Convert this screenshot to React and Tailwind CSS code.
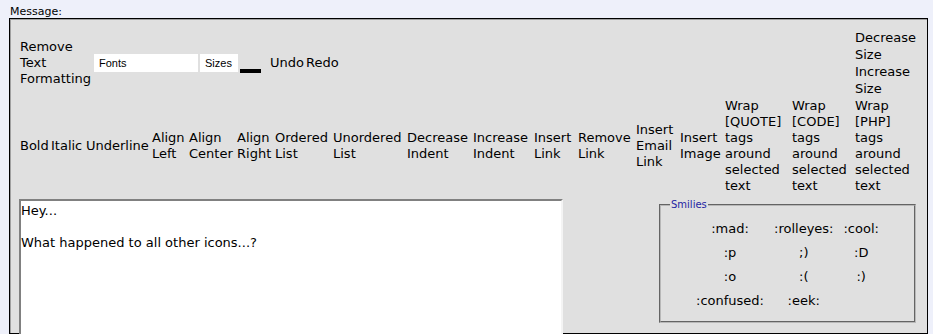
const font = "font-['DejaVu_Sans',Verdana,sans-serif]";

const row2 = [
  ["Bold", 31],
  ["Italic", 35],
  ["Underline", 66],
  ["Align Left", 37],
  ["Align Center", 48],
  ["Align Right", 38],
  ["Ordered List", 58],
  ["Unordered List", 74],
  ["Decrease Indent", 66],
  ["Increase Indent", 61],
  ["Insert Link", 44],
  ["Remove Link", 58],
  ["Insert Email Link", 44],
  ["Insert Image", 45],
  ["Wrap [QUOTE] tags around selected text", 67],
  ["Wrap [CODE] tags around selected text", 63],
  ["Wrap [PHP] tags around selected text", 64],
];

const smilies = [
  ":mad:", ":rolleyes:", ":cool:",
  ":p", ";)", ":D",
  ":o", ":(", ":)",
  ":confused:", ":eek:", "",
];

export default function App() {
  return (
    <div className={`${font} min-h-[334px] bg-[#eef0fa] text-black overflow-hidden`}>
      <div className="h-[18px] pl-[10px] pt-[5px] text-[11px] leading-[13px]">Message:</div>

      <div className="ml-[9px] mr-[5px] h-[316px] border border-black bg-[#e0e0e0] px-[9px] pt-[10px] shadow-[inset_1px_1px_0_#a0a0a0]">
        {/* top toolbar row */}
        <div className="flex h-[68px] items-center text-[13px]">
          <div className="w-[75px] pl-[1px] leading-[16px]">Remove Text Formatting</div>
          <div className="h-[18px] w-[104px] bg-white pl-[5px] font-['Liberation_Sans',Arial,sans-serif] text-[11px] leading-[18px]">
            Fonts
          </div>
          <div className="ml-[2px] h-[18px] w-[38px] bg-white pl-[5px] font-['Liberation_Sans',Arial,sans-serif] text-[11px] leading-[18px]">
            Sizes
          </div>
          <div className="ml-[2px] flex h-[20px] w-[21px] items-end">
            <div className="h-[4px] w-full bg-black" />
          </div>
          <div className="ml-[8px] px-[1px] leading-[16px]">Undo</div>
          <div className="px-[1px] leading-[16px]">Redo</div>
          <div className="ml-auto w-[64px] pl-[1px] leading-[17px]">
            <div>Decrease Size</div>
            <div>Increase Size</div>
          </div>
        </div>

        {/* second toolbar row */}
        <div className="mt-[1px] flex h-[96px] items-center text-[13px] leading-[16px]">
          {row2.map(([label, w]) => (
            <div key={label} className="pl-[1px]" style={{ width: w }}>
              {label}
            </div>
          ))}
        </div>

        {/* editor + smilies */}
        <div className="mt-[5px] flex items-start">
          <textarea
            readOnly
            defaultValue={"Hey...\n\nWhat happened to all other icons...?"}
            className="h-[160px] w-[544px] resize-none border-2 border-t-[#808080] border-l-[#808080] border-r-[#f4f4f4] border-b-[#f4f4f4] bg-white px-0 pt-[2px] text-[13px] leading-[16px] text-black outline-none"
          />
          <fieldset className="ml-auto mr-[2px] w-[257px] border-2 border-[#b8b8b8] [border-style:groove] px-[9px] pb-[8px] pt-[6px]">
            <legend className="px-[1px] text-[10px] leading-[12px] text-[#1f1fa3]">Smilies</legend>
            <div className="grid grid-cols-[auto_auto_auto] justify-center text-[13px]">
              {smilies.map((s, i) => (
                <div key={i} className="h-[24px] px-[5px] text-center leading-[24px]">
                  {s}
                </div>
              ))}
            </div>
          </fieldset>
        </div>
      </div>
    </div>
  );
}
